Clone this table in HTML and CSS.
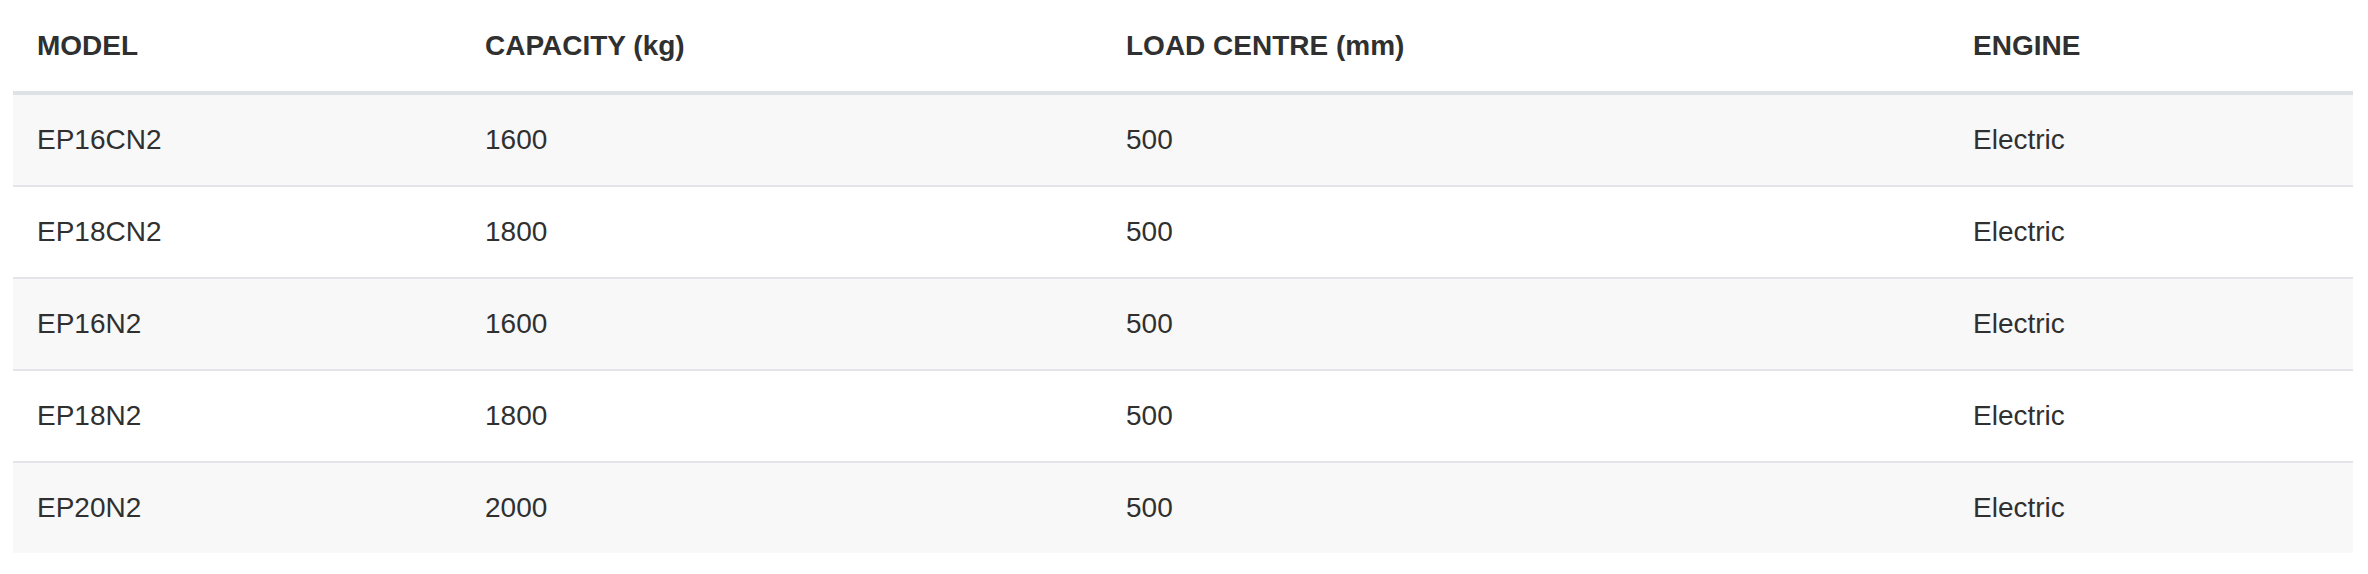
FILE: index.html
```html
<!DOCTYPE html>
<html lang="en">
<head>
<meta charset="utf-8">
<title>Models</title>
<link rel="stylesheet" href="styles.css">
</head>
<body>
<div class="wrap">
  <table class="spec">
    <colgroup>
      <col class="c1"><col class="c2"><col class="c3"><col class="c4">
    </colgroup>
    <thead>
      <tr><th>MODEL</th><th>CAPACITY (kg)</th><th>LOAD CENTRE (mm)</th><th>ENGINE</th></tr>
    </thead>
    <tbody>
      <tr><td>EP16CN2</td><td>1600</td><td>500</td><td>Electric</td></tr>
      <tr><td>EP18CN2</td><td>1800</td><td>500</td><td>Electric</td></tr>
      <tr><td>EP16N2</td><td>1600</td><td>500</td><td>Electric</td></tr>
      <tr><td>EP18N2</td><td>1800</td><td>500</td><td>Electric</td></tr>
      <tr><td>EP20N2</td><td>2000</td><td>500</td><td>Electric</td></tr>
    </tbody>
  </table>
</div>
</body>
</html>
```

FILE: styles.css
```css
html, body {
  margin: 0;
  padding: 0;
  background: #ffffff;
}
.wrap {
  padding-left: 13px;
}
.spec {
  width: 2340px;
  table-layout: fixed;
  border-collapse: collapse;
  border-spacing: 0;
  font-family: "Liberation Sans", Arial, Helvetica, sans-serif;
  font-size: 28px;
  line-height: 41px;
  color: #303030;
}
.c1 { width: 448px; }
.c2 { width: 641px; }
.c3 { width: 847px; }
.c4 { width: 404px; }
.spec th {
  text-align: left;
  font-weight: bold;
  padding: 25px 24px;
  border-bottom: 4px solid #dee2e6;
}
.spec td {
  padding: 24px 24px 25px;
  text-align: left;
}
.spec tbody tr + tr td {
  border-top: 2px solid #e3e5e9;
}
.spec tbody tr:nth-child(odd) td {
  background: #f8f8f8;
}
```
